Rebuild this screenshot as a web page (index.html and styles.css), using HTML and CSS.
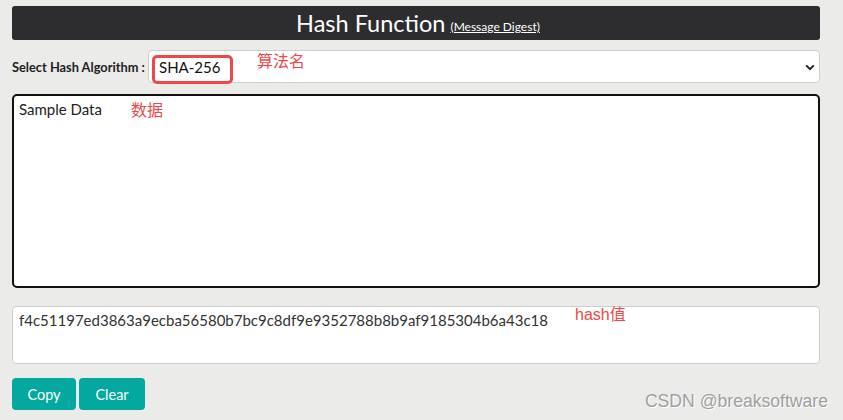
FILE: index.html
```html
<!DOCTYPE html>
<html lang="zh">
<head>
<meta charset="utf-8">
<title>Hash Function</title>
<link rel="stylesheet" href="styles.css">
</head>
<body>
<div class="page">
  <div class="header">
    <span class="title">Hash Function</span>
    <a class="sub" href="#">(Message Digest)</a>
  </div>
  <div class="algo-row">
    <label class="algo-label">Select Hash Algorithm :</label>
    <div class="select">
      <span class="select-value">SHA-256</span>
      <svg class="chev" width="10" height="7" viewBox="0 0 10 7"><path d="M1.2 1.4 L5 5.2 L8.8 1.4" fill="none" stroke="#222" stroke-width="2"/></svg>
      <span class="mark-box"></span>
      <span class="note note-algo">算法名</span>
    </div>
  </div>
  <div class="input">
    <span class="input-text">Sample Data</span>
    <span class="note note-data">数据</span>
  </div>
  <div class="output">
    <span class="output-text">f4c51197ed3863a9ecba56580b7bc9c8df9e9352788b8b9af9185304b6a43c18</span>
    <span class="note note-hash">hash值</span>
  </div>
  <div class="buttons">
    <button class="btn btn-copy">Copy</button>
    <button class="btn btn-clear">Clear</button>
  </div>
  <div class="watermark">CSDN @breaksoftware</div>
</div>
</body>
</html>
```
FILE: styles.css
```css
* { box-sizing: border-box; }
html, body { margin: 0; padding: 0; }
body {
  background: #ebebe9;
  width: 843px;
  height: 420px;
  overflow: hidden;
  font-family: Lato, "Noto Sans CJK SC", sans-serif;
  color: #222;
}
.page {
  position: relative;
  width: 843px;
  height: 420px;
  padding: 6px 23px 0 12px;
}
.header {
  height: 34px;
  background: #2d2d2f;
  border-radius: 3px;
  display: flex;
  align-items: center;
  justify-content: center;
  gap: 5px;
  padding-left: 4px;
}
.title {
  color: #fff;
  font-size: 23.5px;
  line-height: 34px;
}
.sub {
  color: #fff;
  font-size: 12px;
  text-decoration: underline;
  margin-top: 7px;
}
.algo-row {
  display: flex;
  align-items: center;
  margin-top: 10px;
  height: 33px;
}
.algo-label {
  font-size: 12.8px;
  font-weight: bold;
  color: #222;
  width: 136px;
  flex: none;
  white-space: nowrap;
}
.select {
  position: relative;
  flex: 1;
  height: 33px;
  background: #fff;
  border: 1px solid #cfcfcf;
  border-radius: 4px;
  display: flex;
  align-items: center;
  justify-content: space-between;
  padding: 0 4px 0 10px;
}
.select-value {
  font-size: 15px;
  color: #111;
  margin-top: 1px;
}
.chev { margin-top: 1px; }
.mark-box {
  position: absolute;
  left: 3px;
  top: 4px;
  width: 81px;
  height: 29px;
  border: 3px solid #f04848;
  border-radius: 5px;
}
.note {
  position: absolute;
  color: #f04848;
  font-family: "Noto Sans CJK SC", sans-serif;
  font-size: 16px;
  line-height: 1;
}
.note-algo { left: 108px; top: 1px; }
.input {
  position: relative;
  margin-top: 11px;
  height: 194px;
  background: #fff;
  border: 2px solid #111;
  border-radius: 5px;
  padding: 3px 5px;
}
.input-text { font-size: 15px; color: #222; }
.note-data { left: 117px; top: 5px; }
.output {
  position: relative;
  margin-top: 18px;
  height: 58px;
  background: #fff;
  border: 1px solid #cfcfcf;
  border-radius: 4px;
  padding: 3px 6px;
}
.output-text { font-size: 15px; color: #333; }
.note-hash { left: 562px; top: 0px; font-family: "Liberation Sans", "Noto Sans CJK SC", sans-serif; }
.buttons {
  display: flex;
  gap: 3px;
  margin-top: 14px;
}
.btn {
  height: 32px;
  border: none;
  border-radius: 4px;
  background: #03a99e;
  color: #fff;
  font-family: Lato, sans-serif;
  font-size: 14.5px;
  padding: 0;
}
.btn-copy { width: 64px; }
.btn-clear { width: 66px; }
.watermark {
  position: absolute;
  right: 15px;
  bottom: 8px;
  font-family: "Liberation Sans", sans-serif;
  font-size: 17.6px;
  color: #a0a0a0;
  text-shadow: 1px 1px 0 #fff;
}
```
